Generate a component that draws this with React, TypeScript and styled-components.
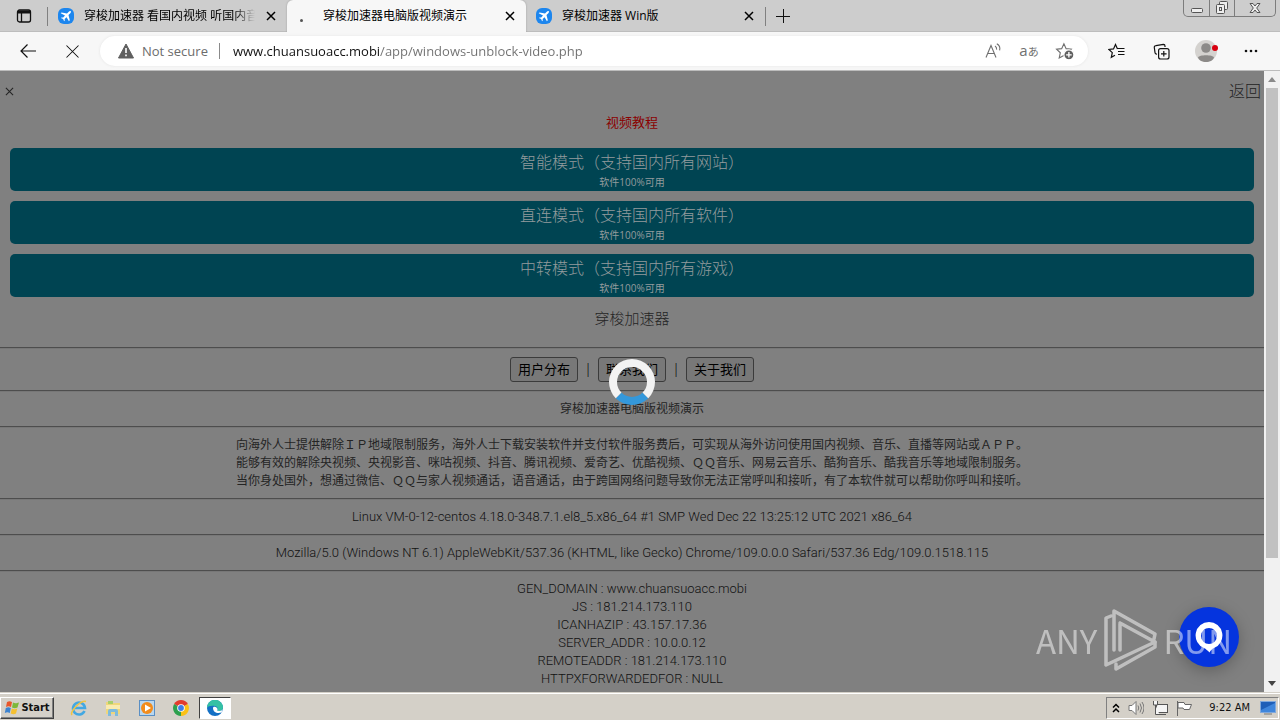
import React from "react";
import styled, { createGlobalStyle } from "styled-components";

const latin = `"Open Sans", "Noto Sans CJK SC", sans-serif`;

const GlobalStyle = createGlobalStyle`
  * { box-sizing: border-box; }
  body { margin: 0; font-family: ${latin}; color: #111; }
  button, input { font: inherit; color: inherit; }
  button { display: inline-flex; align-items: center; justify-content: center; padding: 0; border: 0; background: none; }
  svg { display: block; flex: none; }
`;

const Screen = styled.div`
  display: flex;
  flex-direction: column;
  height: 100vh;
  overflow: hidden;
`;

/* ---------- tab strip ---------- */
const TabStrip = styled.header`
  display: flex;
  flex: none;
  height: 32px;
  background: #cdcdcd;
  box-shadow: inset 0 -1px #bdbdbd;
`;
const TabMenu = styled.button`
  width: 47px;
`;
const Divider = styled.span<{ $h: number; $color?: string }>`
  flex: none;
  align-self: center;
  width: 1px;
  height: ${(p) => p.$h}px;
  background: ${(p) => p.$color ?? "#808080"};
`;
const TabItem = styled.div<{ $active?: boolean }>`
  display: flex;
  align-items: center;
  flex: 0 1 239px;
  min-width: 0;
  gap: 10px;
  padding: 0 10px;
  font-size: 12px;
  color: #000;
  background: ${(p) => (p.$active ? "#f7f7f7" : "transparent")};
  border-radius: ${(p) => (p.$active ? "6px 6px 0 0" : "0")};
  box-shadow: ${(p) => (p.$active ? "0 0 2px #999" : "none")};
`;
const TabTitle = styled.span<{ $fade?: boolean }>`
  flex: 1;
  min-width: 0;
  overflow: hidden;
  white-space: nowrap;
  line-height: 20px;
  mask-image: ${(p) => (p.$fade ? "linear-gradient(90deg, #000 88%, transparent)" : "none")};
`;
const TabClose = styled.button`
  width: 12px;
  height: 16px;
`;
const LoadingDot = styled.span`
  width: 16px;
  padding-left: 3px;
  &::before {
    content: "";
    display: block;
    width: 3px;
    height: 3px;
    margin-top: 8px;
    border-radius: 2px;
    background: #555;
  }
`;
const NewTab = styled.button`
  width: 34px;
`;
const WindowControls = styled.div`
  display: flex;
  height: 17px;
  margin: 0 4px 0 auto;
  border: 1px solid #7c7c7c;
  border-top: 0;
  border-radius: 0 0 5px 5px;
`;
const WindowButton = styled.button<{ $w: number }>`
  width: ${(p) => p.$w}px;
  & + & {
    border-left: 1px solid #7c7c7c;
  }
`;

/* ---------- toolbar ---------- */
const Toolbar = styled.nav`
  display: flex;
  align-items: center;
  flex: none;
  height: 39px;
  padding: 0 13px 0 12px;
  background: #f7f7f7;
  border-bottom: 1px solid #bcbcbc;
`;
const ToolButton = styled.button`
  flex: none;
  width: 32px;
  height: 32px;
`;
const NavButtons = styled.div`
  display: flex;
  gap: 12px;
  margin-right: 12px;
`;
const ToolActions = styled.div`
  display: flex;
  gap: 13px;
  margin-left: 12px;
`;
const AddressBar = styled.div`
  display: flex;
  align-items: center;
  flex: 1;
  min-width: 0;
  height: 30px;
  padding: 0 7px 0 18px;
  border-radius: 15px;
  background: #fff;
  box-shadow: 0 0 3px #e4e4e4;
  font-size: 13px;
`;
const Security = styled.span`
  margin: 0 11px 0 8px;
  color: #6c6c6c;
  white-space: nowrap;
`;
const UrlInput = styled.input`
  flex: 1;
  min-width: 0;
  height: 24px;
  margin-left: 13px;
  padding: 0;
  border: 0;
  outline: 0;
  color: transparent;
  background: linear-gradient(90deg, #111 146px, #707070 146px);
  background-clip: text;
`;
const AddressIcon = styled.button`
  flex: none;
  width: 32px;
  height: 28px;
  margin-left: 4px;
  color: #707070;
`;
const TranslateLabel = styled.span`
  font-size: 15px;
  line-height: 18px;
  small {
    font-size: 11px;
  }
`;

/* ---------- web page ---------- */
const Viewport = styled.div`
  display: flex;
  flex: 1;
  min-height: 0;
`;
const Page = styled.main`
  position: relative;
  flex: 1;
  min-width: 0;
  overflow: hidden;
  background: #808080;
  color: #242424;
  font-size: 12px;
  line-height: 18px;
  text-align: center;
`;
const PageHeader = styled.div`
  display: flex;
  justify-content: space-between;
  align-items: center;
  height: 40px;
  padding: 0 3px 0 5px;
  font-size: 16px;
`;
const Back = styled.a`
  color: #222;
  font-weight: 300;
  text-decoration: none;
`;
const Tutorial = styled.a`
  display: block;
  padding: 1px 0 16px;
  color: #8b0000;
  font-size: 13px;
  line-height: 20px;
  text-decoration: none;
`;
const Modes = styled.div`
  display: flex;
  flex-direction: column;
  gap: 10px;
  padding: 0 10px;
`;
const ModeButton = styled.button`
  flex-direction: column;
  height: 43px;
  padding-top: 2px;
  border-radius: 5px;
  background: #004452;
  color: #939b9d;
  font-size: 16px;
  font-weight: 300;
  line-height: 24px;
  small {
    font-size: 10px;
    font-weight: 400;
    line-height: 17px;
  }
`;
const Brand = styled.h1`
  margin: 0;
  padding: 10px 0;
  font-size: 15px;
  font-weight: 300;
  line-height: 22px;
`;
const Rule = styled.hr`
  margin: 8px 0;
  border: 0;
  border-top: 1px solid #4d4d4d;
  border-bottom: 1px solid #777;
`;
const LinkRow = styled.div`
  display: flex;
  justify-content: center;
  height: 25px;
  line-height: 23px;
`;
const LinkButton = styled.button`
  padding: 0 7px;
  border: 1px solid #3b3b3b;
  border-radius: 3px;
  background: #787878;
  color: #000;
  font-size: 13px;
`;
const Bar = styled.span`
  width: 20px;
  color: #000;
  font-size: 15px;
  font-weight: 300;
`;
const SystemLine = styled.div`
  font-family: Roboto, sans-serif;
  font-size: 13px;
  font-weight: 300;
  color: #111;
`;
const Spinner = styled.div`
  position: absolute;
  top: 50%;
  left: 50%;
  width: 46px;
  height: 46px;
  margin: -23px;
  border: 8px solid #f3f3f3;
  border-bottom-color: #3498db;
  border-radius: 50%;
`;
const ChatButton = styled.button`
  position: absolute;
  right: 25px;
  bottom: 25px;
  width: 60px;
  height: 60px;
  border-radius: 50%;
  background: #0534de;
  box-shadow: 0 4px 16px rgba(0, 0, 0, 0.25);
`;
const Watermark = styled.div`
  position: absolute;
  right: 32px;
  bottom: 20px;
  display: flex;
  align-items: center;
  gap: 5px;
  color: #fff;
  opacity: 0.5;
  font-family: "Noto Sans CJK SC", sans-serif;
  font-size: 33px;
  line-height: 62px;
`;
const ScrollTrack = styled.div`
  display: flex;
  flex-direction: column;
  align-items: center;
  flex: none;
  width: 16px;
  background: #f1f1f1;
`;
const ScrollArrow = styled.button`
  width: 16px;
  height: 17px;
`;
const ScrollSpace = styled.div`
  flex: 1;
  width: 12px;
`;
const ScrollThumb = styled.div`
  height: 80%;
  background: #c1c1c1;
`;

/* ---------- taskbar ---------- */
const Taskbar = styled.footer`
  display: flex;
  align-items: center;
  flex: none;
  height: 28px;
  padding: 3px 1px 0 0;
  background: #d4d0c8;
  box-shadow: inset 0 1px #d4d0c8, inset 0 2px #fff;
  font-family: "DejaVu Sans Condensed", "DejaVu Sans", sans-serif;
  font-size: 11px;
`;
const StartButton = styled.button`
  gap: 1px;
  width: 54px;
  height: 22px;
  border: 1px solid;
  border-color: #fff #404040 #404040 #fff;
  box-shadow: inset -1px -1px #808080;
  font-weight: 700;
`;
const QuickLaunch = styled.div`
  display: flex;
  gap: 2px;
  margin-left: 9px;
`;
const TaskButton = styled.button<{ $pressed?: boolean }>`
  width: 32px;
  height: 22px;
  border: 1px solid;
  border-color: ${(p) => (p.$pressed ? "#404040 #fff #fff #404040" : "transparent")};
  background: ${(p) => (p.$pressed ? "#fff" : "none")};
`;
const Tray = styled.div`
  display: flex;
  align-items: center;
  gap: 8px;
  height: 22px;
  margin-left: auto;
  padding: 0 2px 0 5px;
  border: 1px solid;
  border-color: #808080 #fff #fff #808080;
`;
const Clock = styled.time`
  margin: 0 2px 0 8px;
  white-space: nowrap;
`;

const Cross = ({ size = 10, width = 1 }: { size?: number; width?: number }) => (
  <svg width={size} height={size} viewBox="0 0 10 10" fill="none" stroke="currentColor" strokeWidth={width}>
    <path d="M1 1l8 8M9 1L1 9" />
  </svg>
);

const Plane = () => (
  <svg width="16" height="16" viewBox="0 0 16 16">
    <rect width="16" height="16" rx="6" fill="#1d86ee" />
    <path d="M12.8 3.2c-.7-.4-1.500 0-2 .5L9 5.500 3.600 4.400l-.9.900 4.300 2.300-1.800 2-1.600-.200-.7.700 2.200 1 1 2.200.7-.7-.2-1.600 2-1.800 2.300 4 .9-.9L10.500 7l1.800-1.800c.5-.5.900-1.400.5-2z" fill="#fff" />
  </svg>
);

const tabs = [
  { title: "穿梭加速器 看国内视频 听国内音", fade: true },
  { title: "穿梭加速器电脑版视频演示", active: true },
  { title: "穿梭加速器 Win版" },
];

const modes = ["智能模式（支持国内所有网站）", "直连模式（支持国内所有软件）", "中转模式（支持国内所有游戏）"];
const links = ["用户分布", "联系我们", "关于我们"];
const intro = [
  "向海外人士提供解除ＩＰ地域限制服务，海外人士下载安装软件并支付软件服务费后，可实现从海外访问使用国内视频、音乐、直播等网站或ＡＰＰ。",
  "能够有效的解除央视频、央视影音、咪咕视频、抖音、腾讯视频、爱奇艺、优酷视频、ＱＱ音乐、网易云音乐、酷狗音乐、酷我音乐等地域限制服务。",
  "当你身处国外，想通过微信、ＱＱ与家人视频通话，语音通话，由于跨国网络问题导致你无法正常呼叫和接听，有了本软件就可以帮助你呼叫和接听。",
];
const server = [
  "GEN_DOMAIN : www.chuansuoacc.mobi",
  "JS : 181.214.173.110",
  "ICANHAZIP : 43.157.17.36",
  "SERVER_ADDR : 10.0.0.12",
  "REMOTEADDR : 181.214.173.110",
  "HTTPXFORWARDEDFOR : NULL",
];

const StarPath = "M8 1.500l2 4.400 4.600.500-3.400 3.200 1 4.700L8 12l-4.200 2.300 1-4.700L1.400 6.400 6 5.900z";

export default function App() {
  return (
    <Screen>
      <GlobalStyle />
      <TabStrip>
        <TabMenu aria-label="Tab actions">
          <svg width="16" height="16" viewBox="0 0 16 16" fill="none" stroke="#111" strokeWidth="1.300">
            <rect x="1.500" y="2" width="13" height="12" rx="2" />
            <path d="M2 4h12" strokeWidth="3" />
            <path d="M5.500 5v9" />
          </svg>
        </TabMenu>
        <Divider $h={19} />
        {tabs.map((t) => (
          <TabItem key={t.title} $active={t.active}>
            {t.active ? <LoadingDot /> : <Plane />}
            <TabTitle $fade={t.fade}>{t.title}</TabTitle>
            <TabClose aria-label="Close tab">
              <Cross size={10} width={1.5} />
            </TabClose>
          </TabItem>
        ))}
        <Divider $h={19} />
        <NewTab aria-label="New tab">
          <svg width="14" height="14" viewBox="0 0 14 14" stroke="#111">
            <path d="M7.500 0v14M0 7.500h14" />
          </svg>
        </NewTab>
        <WindowControls>
          <WindowButton $w={25} aria-label="Minimize">
            <svg width="12" height="12" viewBox="0 0 12 12" fill="#eee" stroke="#555">
              <rect x=".5" y="6.500" width="11" height="4" rx="1" />
            </svg>
          </WindowButton>
          <WindowButton $w={25} aria-label="Restore">
            <svg width="14" height="14" viewBox="0 0 14 14" fill="#eee" stroke="#555">
              <rect x="4.500" y=".5" width="8" height="8" rx="1" />
              <rect x="1.500" y="3.500" width="8" height="9" rx="1" />
              <rect x="4.500" y="6.500" width="2" height="3" />
            </svg>
          </WindowButton>
          <WindowButton $w={41} aria-label="Close window">
            <svg width="12" height="12" viewBox="0 0 12 12" fill="#eee" stroke="#555">
              <path d="M1 1.500h3l2 2.500 2-2.500h3L7.700 6 11 10.500H8L6 8l-2 2.500H1L4.300 6z" />
            </svg>
          </WindowButton>
        </WindowControls>
      </TabStrip>

      <Toolbar>
        <NavButtons>
          <ToolButton aria-label="Back">
            <svg width="16" height="14" viewBox="0 0 16 14" fill="none" stroke="#111" strokeWidth="1.200">
              <path d="M16 7H1M7.500.500L1 7l6.500 6.500" />
            </svg>
          </ToolButton>
          <ToolButton aria-label="Stop loading">
            <Cross size={15} width={0.7} />
          </ToolButton>
        </NavButtons>
        <AddressBar>
          <svg width="16" height="16" viewBox="0 0 16 16">
            <path d="M8 1L.500 15h15z" fill="#5f5f5f" stroke="#5f5f5f" strokeLinejoin="round" />
            <path d="M8 5v5M8 11.500v1.800" stroke="#fff" strokeWidth="1.600" />
          </svg>
          <Security>Not secure</Security>
          <Divider $h={16} $color="#8a8a8a" />
          <UrlInput aria-label="Address" defaultValue="www.chuansuoacc.mobi/app/windows-unblock-video.php" />
          <AddressIcon aria-label="Read aloud">
            <svg width="17" height="16" viewBox="0 0 17 16" fill="none" stroke="currentColor" strokeWidth="1.100">
              <path d="M1 14.500L6 2.500l5 12M2.800 10.500h6.400M10 3c1.300.8 1.800 2 1.600 3.600M11.800.800c2.500 1.400 3.500 4 2.800 6.600" />
            </svg>
          </AddressIcon>
          <AddressIcon aria-label="Translate">
            <TranslateLabel>
              a<small>あ</small>
            </TranslateLabel>
          </AddressIcon>
          <AddressIcon aria-label="Add to favorites">
            <svg width="20" height="19" viewBox="0 0 18 17" fill="none" stroke="currentColor">
              <path d={StarPath} />
              <circle cx="12.500" cy="11.500" r="4.500" fill="#606060" stroke="#fff" />
              <path d="M12.500 9v5M10 11.500h5" stroke="#fff" strokeWidth="1.200" />
            </svg>
          </AddressIcon>
        </AddressBar>
        <ToolActions>
          <ToolButton aria-label="Favorites">
            <svg width="17" height="16" viewBox="0 0 17 16" fill="none" stroke="#111" strokeWidth="1.200">
              <path d="M9.500 5.900L7.500 1.500l-2 4.400L.9 6.400l3.400 3.200-1 4.700L7 12.300M9.500 5.500h7M10 8.500h6.500M10 11.500h6.500" />
            </svg>
          </ToolButton>
          <ToolButton aria-label="Collections">
            <svg width="17" height="17" viewBox="0 0 17 17" fill="none" stroke="#111" strokeWidth="1.200">
              <path d="M12 4V3a1.600 1.600 0 0 0-1.600-1.600L3 2.600A1.700 1.700 0 0 0 1.300 4.500L2 9.500a1.700 1.700 0 0 0 2 1.500" />
              <rect x="5.600" y="5.600" width="10.400" height="10.400" rx="2" />
              <path d="M10.800 8v5.600M8 10.800h5.600" />
            </svg>
          </ToolButton>
          <ToolButton aria-label="Profile">
            <svg width="24" height="24" viewBox="0 0 24 24">
              <circle cx="12" cy="12" r="11" fill="#d4d2cf" />
              <circle cx="12" cy="9" r="4.800" fill="#8c8a88" />
              <path d="M4 18.500c1-3 15-3 16 0-2 6-14 6-16 0z" fill="#8c8a88" />
              <circle cx="21" cy="9" r="3" fill="#d8000f" />
            </svg>
          </ToolButton>
          <ToolButton aria-label="Settings and more">
            <svg width="14" height="4" viewBox="0 0 14 4" fill="#111">
              <circle cx="2" cy="2" r="1.300" />
              <circle cx="7" cy="2" r="1.300" />
              <circle cx="12" cy="2" r="1.300" />
            </svg>
          </ToolButton>
        </ToolActions>
      </Toolbar>

      <Viewport>
        <Page>
          <PageHeader>
            <button aria-label="Close">
              <Cross size={9} width={1.2} />
            </button>
            <Back href="#back">返回</Back>
          </PageHeader>
          <Tutorial href="#video">视频教程</Tutorial>
          <Modes>
            {modes.map((m) => (
              <ModeButton key={m}>
                <span>{m}</span>
                <small>软件100%可用</small>
              </ModeButton>
            ))}
          </Modes>
          <Brand>穿梭加速器</Brand>
          <Rule />
          <LinkRow>
            {links.map((l, i) => (
              <React.Fragment key={l}>
                {i > 0 && <Bar>|</Bar>}
                <LinkButton>{l}</LinkButton>
              </React.Fragment>
            ))}
          </LinkRow>
          <Rule />
          <div>穿梭加速器电脑版视频演示</div>
          <Rule />
          {intro.map((line) => (
            <div key={line}>{line}</div>
          ))}
          <Rule />
          <SystemLine>Linux VM-0-12-centos 4.18.0-348.7.1.el8_5.x86_64 #1 SMP Wed Dec 22 13:25:12 UTC 2021 x86_64</SystemLine>
          <Rule />
          <SystemLine>Mozilla/5.0 (Windows NT 6.1) AppleWebKit/537.36 (KHTML, like Gecko) Chrome/109.0.0.0 Safari/537.36 Edg/109.0.1518.115</SystemLine>
          <Rule />
          {server.map((line) => (
            <SystemLine key={line}>{line}</SystemLine>
          ))}
          <Spinner role="status" aria-label="Loading" />
          <ChatButton aria-label="Chat">
            <svg width="30" height="34" viewBox="0 0 30 34">
              <path d="M15 2a13.500 13.500 0 0 1 5 26c-2 1-3.500 2.500-4.500 4.500C13.500 30.500 12 29 10 28A13.500 13.500 0 0 1 15 2zm0 6a8 8 0 1 0 0 16 8 8 0 0 0 0-16z" fill="#fff" fillRule="evenodd" />
            </svg>
          </ChatButton>
          <Watermark>
            <span>ANY</span>
            <svg width="56" height="64" viewBox="0 0 56 64" fill="none" stroke="#fff" strokeWidth="3.500" strokeLinejoin="round" strokeLinecap="round">
              <path d="M12 42V3l41 23-1 5M18 15l35 19L4 57V10l5-2M18 15v27" />
              <path d="M14 56v5l39-22v-5" />
            </svg>
            <span>RUN</span>
          </Watermark>
        </Page>
        <ScrollTrack>
          <ScrollArrow aria-label="Scroll up">
            <svg width="8" height="5" viewBox="0 0 8 5"><path d="M0 5l4-5 4 5z" fill="#8a8a8a" /></svg>
          </ScrollArrow>
          <ScrollSpace>
            <ScrollThumb />
          </ScrollSpace>
          <ScrollArrow aria-label="Scroll down">
            <svg width="8" height="5" viewBox="0 0 8 5"><path d="M0 0l4 5 4-5z" fill="#444" /></svg>
          </ScrollArrow>
        </ScrollTrack>
      </Viewport>

      <Taskbar>
        <StartButton>
          <svg width="16" height="16" viewBox="0 0 16 16">
            <path d="M3 2c2-1 3-1 5 0L7 7C5 6 4 6 2 7z" fill="#e8562a" />
            <path d="M9 2.500c2 1 3 1 6 0L13.500 7.500c-2 1-3.500 1-5.500 0z" fill="#7db83a" />
            <path d="M1.800 8c2-1 3-1 5 0l-1 5c-2-1-3-1-5 0z" fill="#3c83d0" />
            <path d="M7.800 8.500c2 1 3.500 1 5.500 0L12 13.500c-2 1-3 1-5.300 0z" fill="#f5c030" />
          </svg>
          Start
        </StartButton>
        <QuickLaunch>
          <TaskButton aria-label="Internet Explorer">
            <svg width="18" height="18" viewBox="0 0 18 18" fill="none">
              <path d="M14.500 12A6 6 0 1 1 15 9H5" stroke="#43a8e2" strokeWidth="2.600" />
              <path d="M2 16C-1 13 11 1 16 2.500" stroke="#efc443" strokeWidth="1.500" />
            </svg>
          </TaskButton>
          <TaskButton aria-label="Windows Explorer">
            <svg width="18" height="18" viewBox="0 0 18 18">
              <path d="M2 3h6l1 1h7v11H2z" fill="#efd67b" />
              <path d="M4 2h5v3H4z" fill="#a9cf6b" />
              <path d="M2 6h14v4H2z" fill="#f9ebb0" />
              <path d="M4 17v-5q0-2 2-2h6q2 0 2 2v5h-3v-4H7v4z" fill="#7ebbdc" />
            </svg>
          </TaskButton>
          <TaskButton aria-label="Media Player">
            <svg width="16" height="16" viewBox="0 0 16 16">
              <rect x=".5" y=".5" width="15" height="15" fill="#b9d7ef" stroke="#5a8fc4" />
              <circle cx="8" cy="8" r="6" fill="#f28c1c" />
              <path d="M6 4.500L12 8l-6 3.500z" fill="#fff" />
            </svg>
          </TaskButton>
          <TaskButton aria-label="Chrome">
            <svg width="16" height="16" viewBox="0 0 16 16">
              <path d="M8 8L1.100 4a8 8 0 0 1 13.800 0z" fill="#e23b2e" />
              <path d="M8 8l6.900-4A8 8 0 0 1 8 16z" fill="#fbc116" />
              <path d="M8 8v8A8 8 0 0 1 1.100 4z" fill="#2da04e" />
              <circle cx="8" cy="8" r="3.800" fill="#fff" />
              <circle cx="8" cy="8" r="2.900" fill="#3f7de8" />
            </svg>
          </TaskButton>
          <TaskButton $pressed aria-label="Edge">
            <svg width="16" height="16" viewBox="0 0 16 16">
              <circle cx="8" cy="8" r="8" fill="#1470c4" />
              <path d="M0 8a8 8 0 0 1 16-.500c0 3-3 4-6 3 1-1 1-4-2-4.500C4 5.500 1 6 0 8z" fill="#35c1a4" />
              <path d="M6 8c0 4 4 6 8.500 4.500L16 9c-1 2-4 2.500-6 1.500 1-1 .5-2-.5-3S6 6.500 6 8z" fill="#fff" />
            </svg>
          </TaskButton>
        </QuickLaunch>
        <Tray>
          <svg width="8" height="10" viewBox="0 0 8 10" fill="none" stroke="#000" strokeWidth="1.500">
            <path d="M1 4.500l3-3 3 3M1 9l3-3 3 3" />
          </svg>
          <svg width="16" height="16" viewBox="0 0 16 16" fill="#fff" stroke="#777">
            <path d="M1 5.500h3l4-4v13l-4-4H1z" />
            <path d="M10 5.500q1.500 2.500 0 5M12 3.500q3 4.500 0 9M14 2q4 6 0 12" fill="none" />
          </svg>
          <svg width="16" height="16" viewBox="0 0 16 16" fill="#f4f4f4" stroke="#555">
            <rect x="4.500" y="4.500" width="11" height="8" />
            <path d="M7 14.500h7M1.500 1v4h4V1M3.500 5v9.500h4" />
          </svg>
          <svg width="17" height="16" viewBox="0 0 17 16" fill="#fff" stroke="#666">
            <path d="M1.500 1v15M2 2.500h6l1 2h6.500l-2 5H8l-1-1.500H2z" />
          </svg>
          <Clock>9:22 AM</Clock>
          <svg width="16" height="14" viewBox="0 0 16 14">
            <rect x=".5" y=".5" width="15" height="11" fill="#1f5fb8" stroke="#7fa8dc" />
            <path d="M1 9L15 2v9H1z" fill="#3f86dc" />
            <path d="M4 13h8" stroke="#777" />
          </svg>
        </Tray>
      </Taskbar>
    </Screen>
  );
}
